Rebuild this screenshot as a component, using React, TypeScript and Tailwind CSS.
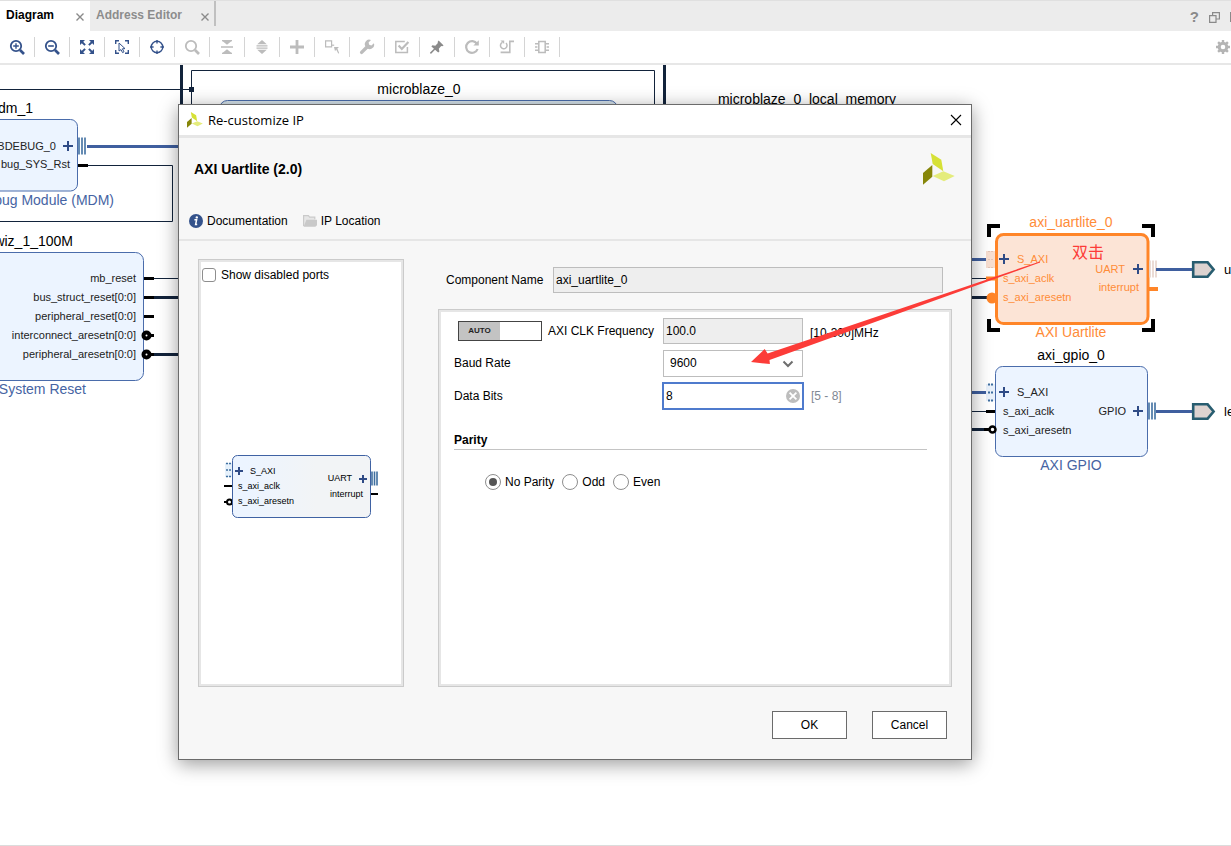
import { useState, type ReactNode } from "react";

const NAVY = "#34528b";
const MUTED = "#bcbcbc";
const WIRE = "#12233b";
const BUS = "#3f5f9f";
const ORANGE = "#ff8528";

function Glyph({ children, color = NAVY }: { children: ReactNode; color?: string }) {
  return (
    <svg width="16" height="16" viewBox="0 0 16 16" fill="none" stroke={color} strokeWidth="2" aria-hidden="true">
      {children}
    </svg>
  );
}

const tools: { name: string; icon: ReactNode }[] = [
  {
    name: "Zoom in",
    icon: (
      <Glyph>
        <circle cx="7" cy="7" r="5.2" strokeWidth="1.8" />
        <path d="M11 11l4 4" strokeWidth="2.6" />
        <path d="M4.2 7h5.6M7 4.2v5.6" strokeWidth="1.4" />
      </Glyph>
    ),
  },
  {
    name: "Zoom out",
    icon: (
      <Glyph>
        <circle cx="7" cy="7" r="5.2" strokeWidth="1.8" />
        <path d="M11 11l4 4" strokeWidth="2.6" />
        <path d="M4.2 7h5.6" strokeWidth="1.6" />
      </Glyph>
    ),
  },
  {
    name: "Zoom fit",
    icon: (
      <Glyph>
        <path d="M2.5 2.5l3.6 3.6M13.5 2.5L9.9 6.1M2.5 13.5l3.6-3.6M13.5 13.5L9.9 9.9" />
        <path d="M1 1h5L1 6zM15 1h-5l5 5zM1 15h5l-5-5zM15 15h-5l5-5z" fill={NAVY} stroke="none" />
      </Glyph>
    ),
  },
  {
    name: "Zoom to selection",
    icon: (
      <Glyph>
        <path d="M1.7 5V1.7H5M11 1.7h3.3V5M14.3 11v3.3H11M5 14.3H1.7V11" strokeWidth="1.4" />
        <path d="M5 4l6 5.6-2.6.2 1.6 3-1.5.8L7 10.6 5 12z" strokeWidth="1" />
      </Glyph>
    ),
  },
  {
    name: "Auto fit selection",
    icon: (
      <Glyph>
        <circle cx="8" cy="8" r="5.8" strokeWidth="1.4" />
        <path d="M8 1v3.600M8 11.400V15M1 8h3.600M11.400 8H15" strokeWidth="1.4" />
      </Glyph>
    ),
  },
  {
    name: "Search",
    icon: (
      <Glyph color={MUTED}>
        <circle cx="7" cy="7" r="5.2" strokeWidth="1.8" />
        <path d="M11 11l4 4" strokeWidth="2.6" />
      </Glyph>
    ),
  },
  {
    name: "Collapse all",
    icon: (
      <Glyph color={MUTED}>
        <path d="M3 1.6h10M2 8h12M3 14.400h10" strokeWidth="1.4" />
        <path d="M3.400 2h9.200L8 5.800zM3.400 14h9.200L8 10.200z" fill={MUTED} stroke="none" />
      </Glyph>
    ),
  },
  {
    name: "Expand all",
    icon: (
      <Glyph color={MUTED}>
        <path d="M2.500 6.900h11M2.500 9.100h11" strokeWidth="1.4" />
        <path d="M3.200 5.200h9.600L8 1zM3.200 10.800h9.600L8 15z" fill={MUTED} stroke="none" />
      </Glyph>
    ),
  },
  {
    name: "Add IP",
    icon: (
      <Glyph color={MUTED}>
        <path d="M8 1v14M1 8h14" strokeWidth="2.8" />
      </Glyph>
    ),
  },
  {
    name: "Make external",
    icon: (
      <Glyph color={MUTED}>
        <path d="M1.6 1.8h6v6h-6z" strokeWidth="1.2" />
        <path d="M7.6 6.2h2.6" strokeWidth="1.2" />
        <path d="M10 8h5l-1.6 1.6 1.8 4.6-1 .4-2-4-1.2 1.6z" fill={MUTED} stroke="none" />
      </Glyph>
    ),
  },
  {
    name: "Customize block",
    icon: (
      <Glyph color={MUTED}>
        <path d="M2.6 13.4L8.8 7.2" strokeWidth="3.4" strokeLinecap="round" />
        <path
          d="M14.9 4.2a4.4 4.4 0 0 1-7.6 4.2A4.4 4.4 0 0 1 12 1.1L9.6 3.6l.6 2.2 2.2.6z"
          fill={MUTED}
          stroke="none"
        />
      </Glyph>
    ),
  },
  {
    name: "Validate design",
    icon: (
      <Glyph color={MUTED}>
        <path d="M13.4 8v5.4H1.8V2.6h9" strokeWidth="1.5" />
        <path d="M4.6 6.6l3.2 3.4L14.4 3" strokeWidth="2.2" />
      </Glyph>
    ),
  },
  {
    name: "Pin",
    icon: (
      <Glyph color="#8a8a8a">
        <path
          d="M9.6 1.6l5 4.8-1.4.9-1-.3-2.4 2.8.6 2.8-1.2 1L2.4 7.4l1-1.2 2.9.5L8.9 4l-.3-1z"
          fill="#8a8a8a"
          stroke="none"
        />
        <path d="M1.4 14.4L6 9.8" strokeWidth="1.5" />
      </Glyph>
    ),
  },
  {
    name: "Regenerate layout",
    icon: (
      <Glyph color={MUTED}>
        <path d="M13 4.8A5.9 5.9 0 1 0 13.6 10" strokeWidth="2.2" />
        <path d="M14.8 1.2v5.4H9.4z" fill={MUTED} stroke="none" />
      </Glyph>
    ),
  },
  {
    name: "Optimize routing",
    icon: (
      <Glyph color={MUTED}>
        <path d="M3.400 3.400A3.300 3.300 0 1 0 7 4" strokeWidth="1.5" />
        <path d="M1.400 1.400h3.800v3.600z" fill={MUTED} stroke="none" />
        <path d="M15 2.400h-4.200v11H1.6" strokeWidth="1.6" />
      </Glyph>
    ),
  },
  {
    name: "Interface view",
    icon: (
      <Glyph color={MUTED}>
        <path d="M4.8 2.4h6.4v11.2H4.8z" strokeWidth="1.5" />
        <path d="M1 4.8h3.4M1 8h2.4M1 11.2h3.4M11.6 4.8H15M12.6 8H15M11.6 11.2H15" strokeWidth="1.5" />
      </Glyph>
    ),
  },
];

function Logo({ size }: { size: number }) {
  return (
    <svg width={size} height={size} viewBox="0 0 32 32" aria-hidden="true">
      <path d="M7.7 0L18.3 6.7l2 11.6L9.7 11z" fill="#d6e136" />
      <path d="M9.3 12v11.7L0 31.7V20z" fill="#868609" />
      <path d="M9.7 23l10.6-4.7L31.7 23 21 28.3z" fill="#e4ec7c" />
    </svg>
  );
}

function TabClose() {
  return (
    <button type="button" aria-label="Close tab" className="flex size-2 items-center justify-center">
      <svg width="8" height="8" viewBox="0 0 8 8" stroke="#8a8a8a" strokeWidth="1.4" aria-hidden="true">
        <path d="M.5.5l7 7M7.5.5l-7 7" />
      </svg>
    </button>
  );
}

function Plus({ x, y, r = 5 }: { x: number; y: number; r?: number }) {
  return <path d={`M${x - r} ${y}h${2 * r}M${x} ${y - r}v${2 * r}`} stroke="#2f4b86" strokeWidth="2" />;
}

function BusEnd({ x, y, color = "#3f6fa0", h = 17 }: { x: number; y: number; color?: string; h?: number }) {
  return (
    <path
      d={`M${x} ${y - h / 2}v${h}M${x + 3} ${y - h / 2}v${h}M${x + 6} ${y - h / 2}v${h}`}
      stroke={color}
      strokeWidth="1.6"
    />
  );
}

function Port({ y }: { y: number }) {
  return (
    <g>
      <path d={`M1156 ${y}h37`} stroke={BUS} strokeWidth="3" />
      <path
        d={`M1193.2 ${y - 7.2}h14.4l6 7.2-6 7.2h-14.4z`}
        fill="#ddd3d0"
        stroke="#285d70"
        strokeWidth="2.6"
      />
    </g>
  );
}

const resetPins = [
  { name: "mb_reset", y: 278, wire: 1, ring: false },
  { name: "bus_struct_reset[0:0]", y: 297, wire: 3, ring: false },
  { name: "peripheral_reset[0:0]", y: 316, wire: 0, ring: false },
  { name: "interconnect_aresetn[0:0]", y: 335, wire: 0, ring: true },
  { name: "peripheral_aresetn[0:0]", y: 354, wire: 3, ring: true },
];

function Diagram() {
  return (
    <svg
      className="absolute top-0 left-0"
      width="1231"
      height="780"
      viewBox="0 65 1231 780"
      fill="none"
      fontFamily='"Liberation Sans", Arial, sans-serif'
    >
      {/* hierarchy outline and processor */}
      <path d="M181.5 65v60M664.5 65v60" stroke={WIRE} strokeWidth="3" />
      <path d="M191.5 130V70.5h463V130M0 89.5h191" stroke={WIRE} />
      <path d="M189 87h5v5h-5z" fill={WIRE} />
      <rect x="219.5" y="100.5" width="398" height="60" rx="8" fill="#d5e2ea" stroke="#4a6cab" />
      <g fill="#000" fontSize="14">
        <text x="419" y="94" textAnchor="middle">microblaze_0</text>
        <text x="807" y="104" textAnchor="middle">microblaze_0_local_memory</text>
      </g>

      {/* debug module */}
      <rect x="-60" y="119.5" width="137.5" height="71.5" rx="7" fill="#ecf4ff" stroke="#4a6cab" />
      <path d="M87 146.5h100" stroke={BUS} strokeWidth="3" />
      <BusEnd x={79} y={146} />
      <Plus x={68} y={146} />
      <path d="M87 165.5h85.5v56H0" stroke={WIRE} />
      <path d="M78 165.5h10" stroke="#000" strokeWidth="3" />
      <g textAnchor="end">
        <text x="33" y="113" fontSize="14" fill="#000">dm_1</text>
        <text x="56" y="150" fontSize="11" fill="#222">BDEBUG_0</text>
        <text x="70" y="168" fontSize="11" fill="#222">bug_SYS_Rst</text>
        <text x="114" y="205" fontSize="14" fill="#4664a3">bug Module (MDM)</text>
      </g>

      {/* system reset */}
      <rect x="-60" y="252.5" width="203.5" height="128" rx="8" fill="#ecf4ff" stroke="#4a6cab" />
      <text x="73" y="246" fontSize="14" fill="#000" textAnchor="end">wiz_1_100M</text>
      {resetPins.map((p) => (
        <g key={p.name}>
          {p.wire > 0 && <path d={`M153 ${p.y + 0.5}h34`} stroke={WIRE} strokeWidth={p.wire} />}
          <path d={`M144 ${p.y + 0.5}h10`} stroke="#000" strokeWidth="3" />
          {p.ring && <circle cx="146.5" cy={p.y + 0.5} r="3" stroke="#000" strokeWidth="4" fill="#fff" />}
          <text x="136" y={p.y + 4} fontSize="11" fill="#222" textAnchor="end">{p.name}</text>
        </g>
      ))}
      <text x="86" y="394" fontSize="14" fill="#4664a3" textAnchor="end">System Reset</text>

      {/* selected uart block */}
      <path d="M960 259.5h27M960 392.5h27" stroke={BUS} strokeWidth="3" />
      <path d="M960 278.5h27M960 411.5h27" stroke={WIRE} />
      <path d="M960 297.5h27M960 429.5h27" stroke={WIRE} strokeWidth="3" />
      <rect x="986" y="251" width="9" height="17" fill="#f8dfd1" />
      <path d="M988 251.5h6M988 259.5h6M988 267.5h6" stroke="#e3c6b8" strokeDasharray="2 1" />
      <path d="M986 278.5h10" stroke={ORANGE} strokeWidth="4" />
      <circle cx="992" cy="298" r="5.5" fill={ORANGE} />
      <rect x="996.5" y="234.5" width="151.5" height="89" rx="7" fill="#fce4d6" stroke={ORANGE} strokeWidth="3" />
      <path d="M1149 289h9" stroke={ORANGE} strokeWidth="4" />
      <path d="M989 237v-11h11M1142 226h11v11M1153 319v11h-11M1000 330h-11v-11" stroke="#000" strokeWidth="4" />
      <BusEnd x={1150} y={269} color="#e6d3ca" />
      <Plus x={1004} y={259} />
      <Plus x={1138} y={269} />
      <Port y={269.5} />
      <g fill="#ff8c38" fontSize="11">
        <text x="1017" y="263">S_AXI</text>
        <text x="1003" y="282">s_axi_aclk</text>
        <text x="1003" y="301">s_axi_aresetn</text>
        <text x="1125" y="273" textAnchor="end">UART</text>
        <text x="1139" y="291" textAnchor="end">interrupt</text>
      </g>
      <g fill="#ff8c38" fontSize="14" textAnchor="middle">
        <text x="1071" y="227">axi_uartlite_0</text>
        <text x="1071" y="337">AXI Uartlite</text>
      </g>

      {/* gpio block */}
      <rect x="995.5" y="366.5" width="152" height="90" rx="7" fill="#ecf4ff" stroke="#4a6cab" />
      <rect x="986" y="384" width="9" height="17" fill="#e9f1fb" />
      <path d="M988 384.5h6M988 392.5h6M988 400.5h6" stroke="#3f6fa0" strokeWidth="2" strokeDasharray="2 1" />
      <path d="M986 411.5h9" stroke="#000" strokeWidth="3" />
      <path d="M984 429.5h7" stroke="#000" strokeWidth="3" />
      <circle cx="992.5" cy="429.5" r="3" stroke="#000" strokeWidth="2.5" fill="#fff" />
      <BusEnd x={1149} y={411} />
      <Plus x={1004} y={392} />
      <Plus x={1138} y={411} />
      <Port y={411.5} />
      <g fill="#222" fontSize="11">
        <text x="1017" y="396">S_AXI</text>
        <text x="1003" y="415">s_axi_aclk</text>
        <text x="1003" y="434">s_axi_aresetn</text>
        <text x="1126" y="415" textAnchor="end">GPIO</text>
      </g>
      <g fontSize="14" textAnchor="middle">
        <text x="1071" y="360" fill="#000">axi_gpio_0</text>
        <text x="1071" y="470" fill="#4664a3">AXI GPIO</text>
      </g>
      <g fill="#000" fontSize="13">
        <text x="1224" y="274">u</text>
        <text x="1224" y="416">le</text>
      </g>
    </svg>
  );
}

function PortPreview() {
  return (
    <svg
      className="overflow-visible"
      width="154"
      height="62"
      viewBox="0 0 154 62"
      fill="none"
      fontFamily='"Liberation Sans", Arial, sans-serif'
    >
      <defs>
        <linearGradient id="previewFill">
          <stop offset="0.1" stopColor="#ecf4ff" />
          <stop offset="0.6" stopColor="#f2f4f6" />
        </linearGradient>
      </defs>
      <rect x="1" y="8" width="7" height="14" fill="#e6f1fb" />
      <path d="M2 8.5h5M2 15h5M2 21.5h5" stroke="#3f6fa0" strokeWidth="1.5" strokeDasharray="2 1" />
      <path d="M0 31h8M0 47h4M146 39h8" stroke="#000" strokeWidth="2" />
      <circle cx="5.5" cy="47" r="2.5" stroke="#000" strokeWidth="2" fill="#fff" />
      <rect x="8.5" y="0.5" width="138" height="62" rx="5" fill="url(#previewFill)" stroke="#3f62a3" />
      <path d="M148 16.5v14M150.5 16.5v14M153 16.5v14" stroke="#3f6fa0" strokeWidth="1.6" />
      <Plus x={15} y={16} r={4} />
      <Plus x={139} y={24} r={4} />
      <g fill="#000" fontSize="9">
        <text x="26" y="19">S_AXI</text>
        <text x="14" y="34">s_axi_aclk</text>
        <text x="14" y="49">s_axi_aresetn</text>
        <text x="128" y="26" textAnchor="end">UART</text>
        <text x="139" y="42" textAnchor="end">interrupt</text>
      </g>
    </svg>
  );
}

function Panel({ children, className }: { children: ReactNode; className: string }) {
  return (
    <div className={`flex border border-[#cbcbcb] ${className}`}>
      <div className="flex grow flex-col border-2 border-[#e6e6e6] bg-white">{children}</div>
    </div>
  );
}

function CustomizeDialog() {
  const [auto, setAuto] = useState(true);
  const [dataBits, setDataBits] = useState("8");
  const [parity, setParity] = useState("No Parity");

  return (
    <section
      role="dialog"
      aria-label="Re-customize IP"
      className="absolute top-[39px] left-[178px] flex w-[794px] flex-col border border-[#6b6b6b] bg-[#f7f7f7] shadow-[0_4px_18px_rgba(0,0,0,0.4)]"
    >
      <div className="flex h-[33px] items-center border-b-[3px] border-[#e6e6e6] bg-white pr-[9px] pb-px pl-2">
        <Logo size={16} />
        <h1 className="ml-[5px] grow font-['Open_Sans',sans-serif] text-[13px] leading-4">Re-customize IP</h1>
        <button type="button" aria-label="Close" className="flex size-3 items-center justify-center">
          <svg width="12" height="12" viewBox="0 0 12 12" stroke="#000" strokeWidth="1.1" aria-hidden="true">
            <path d="M1 1l10 10M11 1L1 11" />
          </svg>
        </button>
      </div>

      <header className="border-b-2 border-[#e6e6e6] pt-[15px] pb-2">
        <div className="flex items-center justify-between pr-4 pl-[15px]">
          <h2 className="text-[14px] leading-5 font-bold">AXI Uartlite (2.0)</h2>
          <Logo size={32} />
        </div>
        <nav className="mt-[26px] flex h-5 items-center gap-[15px] pl-[10px]">
          <a href="#documentation" className="flex items-center gap-1">
            <svg width="14" height="14" viewBox="0 0 14 14" aria-hidden="true">
              <circle cx="7" cy="7" r="7" fill={NAVY} />
              <circle cx="7.8" cy="3.4" r="1.2" fill="#fff" />
              <path d="M5.4 5.8h2.2L6.6 10.6h1.6" fill="none" stroke="#fff" strokeWidth="1.5" />
            </svg>
            Documentation
          </a>
          <a href="#location" className="flex items-center gap-1">
            <svg width="14" height="14" viewBox="0 0 14 14" aria-hidden="true">
              <path d="M.6 12V1.6h4.8l1.2 1.6h5.2v2.2" fill="#e6e6e6" stroke="#cacaca" strokeWidth="1.2" />
              <path d="M.6 12.8L3.4 5.8H14v5.4l-1.6 1.6z" fill="#c9c9c9" />
            </svg>
            IP Location
          </a>
        </nav>
      </header>

      <div className="flex gap-[34px] pt-[18px] pr-[19px] pl-[19px]">
        <Panel className="w-[206px] shrink-0">
          <label className="flex h-[26px] items-center gap-[5px] pl-px">
            <input
              type="checkbox"
              className="size-[14px] appearance-none rounded-[3px] border border-[#8e8e8e] bg-white checked:bg-[#555]"
            />
            Show disabled ports
          </label>
          <div className="flex grow items-center justify-center">
            <PortPreview />
          </div>
        </Panel>

        <form className="flex grow flex-col gap-4 pt-2" onSubmit={(e) => e.preventDefault()}>
          <div className="flex items-center pr-[9px] pl-2">
            <label htmlFor="component" className="w-[107px] shrink-0">Component Name</label>
            <input
              id="component"
              readOnly
              defaultValue="axi_uartlite_0"
              className="h-[26px] min-w-0 grow border border-[#bdbdbd] bg-[#eeeeee] px-[2px] outline-none"
            />
          </div>

          <Panel className="min-h-[378px]">
            <div className="flex flex-col pt-[3px] pl-[13px]">
              <div className="flex h-8 items-center">
                <div className="flex w-[209px] items-center gap-[6px] pl-1">
                  <button
                    type="button"
                    aria-label="Automatic frequency"
                    aria-pressed={auto}
                    onClick={() => setAuto(!auto)}
                    className="flex h-5 w-[84px] border border-[#444] bg-white"
                  >
                    <span className="flex h-full w-1/2 items-center justify-center bg-[#c3c3c3] text-[8px] font-bold text-[#222]">
                      AUTO
                    </span>
                  </button>
                  <label htmlFor="frequency">AXI CLK Frequency</label>
                </div>
                <input
                  id="frequency"
                  readOnly
                  defaultValue="100.0"
                  className="h-[26px] w-[140px] border border-[#bdbdbd] bg-[#eeeeee] px-[2px] outline-none"
                />
                <span className="ml-[7px] pt-1">[10-300]MHz</span>
              </div>

              <div className="flex h-8 items-center">
                <label htmlFor="baud" className="w-[209px]">Baud Rate</label>
                <div className="relative w-[140px]">
                  <select
                    id="baud"
                    defaultValue="9600"
                    className="h-[27px] w-full appearance-none border border-[#bdbdbd] bg-white pr-6 pl-[6px] outline-none"
                  >
                    <option>4800</option>
                    <option>9600</option>
                    <option>19200</option>
                    <option>115200</option>
                  </select>
                  <svg
                    className="pointer-events-none absolute top-[10px] right-[9px]"
                    width="12"
                    height="8"
                    viewBox="0 0 12 8"
                    fill="none"
                    stroke="#6e6e6e"
                    strokeWidth="2"
                    aria-hidden="true"
                  >
                    <path d="M1.5 1.5L6 6l4.5-4.5" />
                  </svg>
                </div>
              </div>

              <div className="flex h-8 items-center pt-px">
                <label htmlFor="bits" className="w-[209px]">Data Bits</label>
                <div className="relative w-[140px]">
                  <input
                    id="bits"
                    value={dataBits}
                    onChange={(e) => setDataBits(e.target.value)}
                    className="block h-[26px] w-full border border-[#4f7bcd] bg-white px-[2px] ring-1 ring-[#4f7bcd] outline-none"
                  />
                  <button
                    type="button"
                    aria-label="Clear data bits"
                    onClick={() => setDataBits("")}
                    className="absolute top-[6px] right-[3px]"
                  >
                    <svg width="14" height="14" viewBox="0 0 14 14" aria-hidden="true">
                      <circle cx="7" cy="7" r="7" fill="#bdbdbd" />
                      <path d="M3.6 3.6l6.8 6.8M10.4 3.6l-6.8 6.8" stroke="#fff" strokeWidth="1.8" />
                    </svg>
                  </button>
                </div>
                <span className="ml-2 text-[#7f8894]">[5 - 8]</span>
              </div>

              <fieldset className="mt-[21px] mr-[22px]">
                <legend className="w-full border-b border-[#c4c4c4] pb-px font-bold">Parity</legend>
                <div className="flex gap-2 pt-6 pl-[31px]">
                  {["No Parity", "Odd", "Even"].map((option) => (
                    <label key={option} className="flex items-center gap-1">
                      <input
                        type="radio"
                        name="parity"
                        checked={parity === option}
                        onChange={() => setParity(option)}
                        className="size-4 appearance-none rounded-full border border-[#8e8e8e] bg-white checked:bg-[#555] checked:bg-clip-content checked:p-[3px]"
                      />
                      {option}
                    </label>
                  ))}
                </div>
              </fieldset>
            </div>
          </Panel>
        </form>
      </div>

      <footer className="flex justify-end gap-[25px] pt-6 pr-6 pb-5">
        <button type="button" className="h-7 w-[75px] border border-[#6b6b6b] bg-white">OK</button>
        <button type="button" className="h-7 w-[75px] border border-[#6b6b6b] bg-white">Cancel</button>
      </footer>
    </section>
  );
}

function Annotation() {
  return (
    <svg
      className="pointer-events-none absolute top-0 left-0"
      width="1231"
      height="780"
      viewBox="0 65 1231 780"
      fontFamily='"Liberation Sans", "Noto Sans CJK SC", sans-serif'
    >
      <path d="M751 362L764.7 349l2.9 4.5L1040 261.5v1L769.5 360l.4 4z" fill="#fc3c38" />
      <text x="1072" y="258" fontSize="16" fill="#fc3c38">双击</text>
    </svg>
  );
}

export default function App() {
  return (
    <div className="flex min-h-screen flex-col overflow-hidden bg-white font-['Liberation_Sans',Arial,sans-serif] text-[12px] leading-4 text-black">
      <div className="flex h-[31px] items-start justify-between border-t border-[#e0e0e0] bg-[#ececec]">
        <div role="tablist" className="flex">
          <div className="flex h-[30px] w-[90px] items-start justify-between bg-white pt-[6px] pr-[6px] pl-[6px] font-bold">
            <button type="button" role="tab" aria-selected="true">Diagram</button>
            <span className="pt-[6px]"><TabClose /></span>
          </div>
          <div className="flex h-[25px] w-[126px] items-start justify-between border-r-2 border-[#c0c0c0] pt-[6px] pr-[5px] pl-[6px] font-bold text-[#8c8c8c]">
            <button type="button" role="tab" aria-selected="false">Address Editor</button>
            <span className="pt-[6px]"><TabClose /></span>
          </div>
        </div>
        <div className="flex items-center gap-[10px] pt-2 text-[#8a8a8a]">
          <button type="button" aria-label="Help" className="text-[15px] font-bold">?</button>
          <button type="button" aria-label="Restore">
            <svg width="11" height="11" viewBox="0 0 11 11" fill="none" stroke="#8a8a8a" strokeWidth="1.2" aria-hidden="true">
              <path d="M.6 3.6h6.4v6.8H.6zM3.6 3.6V.6h6.8v6.4H7" />
            </svg>
          </button>
          <span className="h-[10px] w-px bg-[#8a8a8a]" />
        </div>
      </div>

      <div className="flex h-[34px] items-center justify-between border-b-2 border-[#e7e7e7]">
        <div role="toolbar" aria-label="Diagram tools" className="flex">
          {tools.map((tool) => (
            <button
              key={tool.name}
              type="button"
              aria-label={tool.name}
              className="flex h-5 w-[35px] items-center justify-center border-r border-[#d4d4d4]"
            >
              {tool.icon}
            </button>
          ))}
        </div>
        <button type="button" aria-label="Settings" className="pr-px">
          <svg width="14" height="14" viewBox="0 0 14 14" fill="none" stroke="#b4b4b4" aria-hidden="true">
            <circle cx="7" cy="7" r="3.8" strokeWidth="3" />
            <path
              d="M7 0v2.5M7 11.5V14M0 7h2.5M11.5 7H14M2.1 2.1l1.8 1.8M10.1 10.1l1.8 1.8M2.1 11.9l1.8-1.8M10.1 3.9l1.8-1.8"
              strokeWidth="2.4"
            />
          </svg>
        </button>
      </div>

      <main className="relative min-h-[700px] grow overflow-hidden border-b border-[#dcdcdc]">
        <Diagram />
        <CustomizeDialog />
        <Annotation />
      </main>
    </div>
  );
}
